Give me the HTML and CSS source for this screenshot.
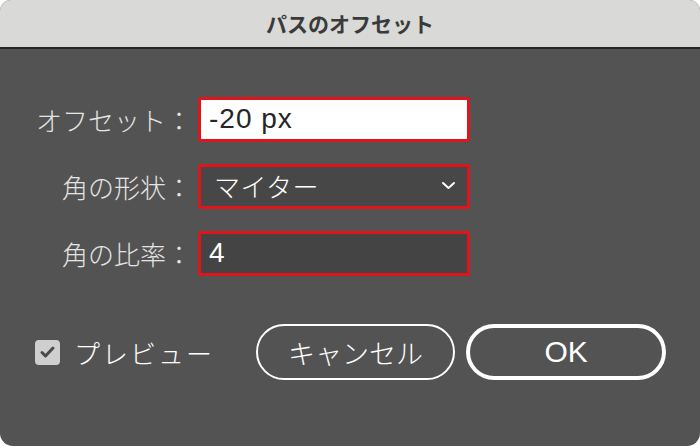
FILE: index.html
```html
<!DOCTYPE html>
<html lang="ja">
<head>
    <meta charset="UTF-8">
    <meta name="viewport" content="width=device-width, initial-scale=1.0">
    <title>パスのオフセット</title>
    <link rel="stylesheet" href="styles.css">
</head>
<body>
    <div class="dialog">
        <div class="titlebar">パスのオフセット</div>
        <div class="content">
            <div class="form">
                <label class="label">オフセット：</label>
                <input class="field field-light" type="text" value="-20 px">
                <label class="label">角の形状：</label>
                <div class="field field-select">
                    <span>マイター</span>
                    <svg class="chevron" width="15" height="9" viewBox="0 0 15 9">
                        <path d="M2 2 L7.5 7 L13 2" fill="none" stroke="#ffffff" stroke-width="2" stroke-linecap="round" stroke-linejoin="round"/>
                    </svg>
                </div>
                <label class="label">角の比率：</label>
                <input class="field field-dark" type="text" value="4">
            </div>
            <div class="footer">
                <div class="preview">
                    <span class="checkbox">
                        <svg width="17" height="14" viewBox="0 0 17 14">
                            <path d="M3 7.5 L6.5 11 L14 3" fill="none" stroke="#4a4a4a" stroke-width="3" stroke-linecap="round" stroke-linejoin="round"/>
                        </svg>
                    </span>
                    <span class="preview-text">プレビュー</span>
                </div>
                <button class="btn btn-cancel">キャンセル</button>
                <button class="btn btn-ok">OK</button>
            </div>
        </div>
    </div>
</body>
</html>
```

FILE: styles.css
```css
* {
    margin: 0;
    padding: 0;
    box-sizing: border-box;
}
body {
    width: 700px;
    height: 446px;
    background-color: #ffffff;
    font-family: "Liberation Sans", "Noto Sans CJK JP", sans-serif;
}
.dialog {
    width: 700px;
    height: 446px;
    display: flex;
    flex-direction: column;
    border-radius: 11px 11px 13px 13px;
    overflow: hidden;
    background-color: #535353;
}
.titlebar {
    height: 49px;
    background-color: #d9dad8;
    border-bottom: 2px solid #262626;
    display: flex;
    justify-content: center;
    align-items: center;
    padding-bottom: 2px;
    font-family: "Noto Sans CJK JP", sans-serif;
    font-size: 21px;
    font-weight: bold;
    color: #3a3a3a;
}
.content {
    flex: 1;
    padding: 48px 34px 0 35px;
}
.form {
    display: grid;
    grid-template-columns: 157px 272px;
    column-gap: 6px;
    row-gap: 22px;
    align-items: center;
}
.label {
    font-family: "Noto Sans CJK JP", sans-serif;
    font-size: 26px;
    font-weight: 300;
    color: #e4e4e4;
    text-align: right;
    line-height: 45px;
}
.field {
    height: 45px;
    border: 3px solid #e0141a;
    border-radius: 3px;
    font-family: "Liberation Sans", "Noto Sans CJK JP", sans-serif;
    font-size: 28px;
    letter-spacing: 1px;
    padding: 0 0 2px 8px;
    outline: none;
}
.field-light {
    background-color: #ffffff;
    color: #262626;
}
.field-dark {
    background-color: #444444;
    color: #ffffff;
}
.field-select {
    background-color: #474747;
    color: #ffffff;
    display: flex;
    align-items: center;
    justify-content: space-between;
    padding: 0 11px 2px 13px;
    font-family: "Noto Sans CJK JP", sans-serif;
    font-size: 26px;
    font-weight: 300;
    letter-spacing: 0.5px;
}
.chevron {
    display: block;
}
.footer {
    margin-top: 48px;
    display: flex;
    align-items: center;
}
.preview {
    display: flex;
    align-items: center;
    gap: 14px;
    width: 221px;
    font-family: "Noto Sans CJK JP", sans-serif;
    font-size: 26px;
    font-weight: 300;
    color: #ffffff;
}
.preview-text {
    letter-spacing: 2px;
}
.checkbox {
    width: 25px;
    height: 25px;
    border-radius: 4px;
    background-color: #cfcfcf;
    display: flex;
    justify-content: center;
    align-items: center;
}
.btn {
    height: 56px;
    border-radius: 28px;
    background: transparent;
    color: #ffffff;
    font-family: "Noto Sans CJK JP", sans-serif;
    font-size: 27px;
    font-weight: 300;
    cursor: pointer;
}
.btn-cancel {
    width: 200px;
    border: 2px solid #ffffff;
}
.btn-ok {
    width: 200px;
    margin-left: 11px;
    border: 4px solid #ffffff;
    font-family: "Liberation Sans", sans-serif;
    font-size: 30px;
    font-weight: normal;
}
```
